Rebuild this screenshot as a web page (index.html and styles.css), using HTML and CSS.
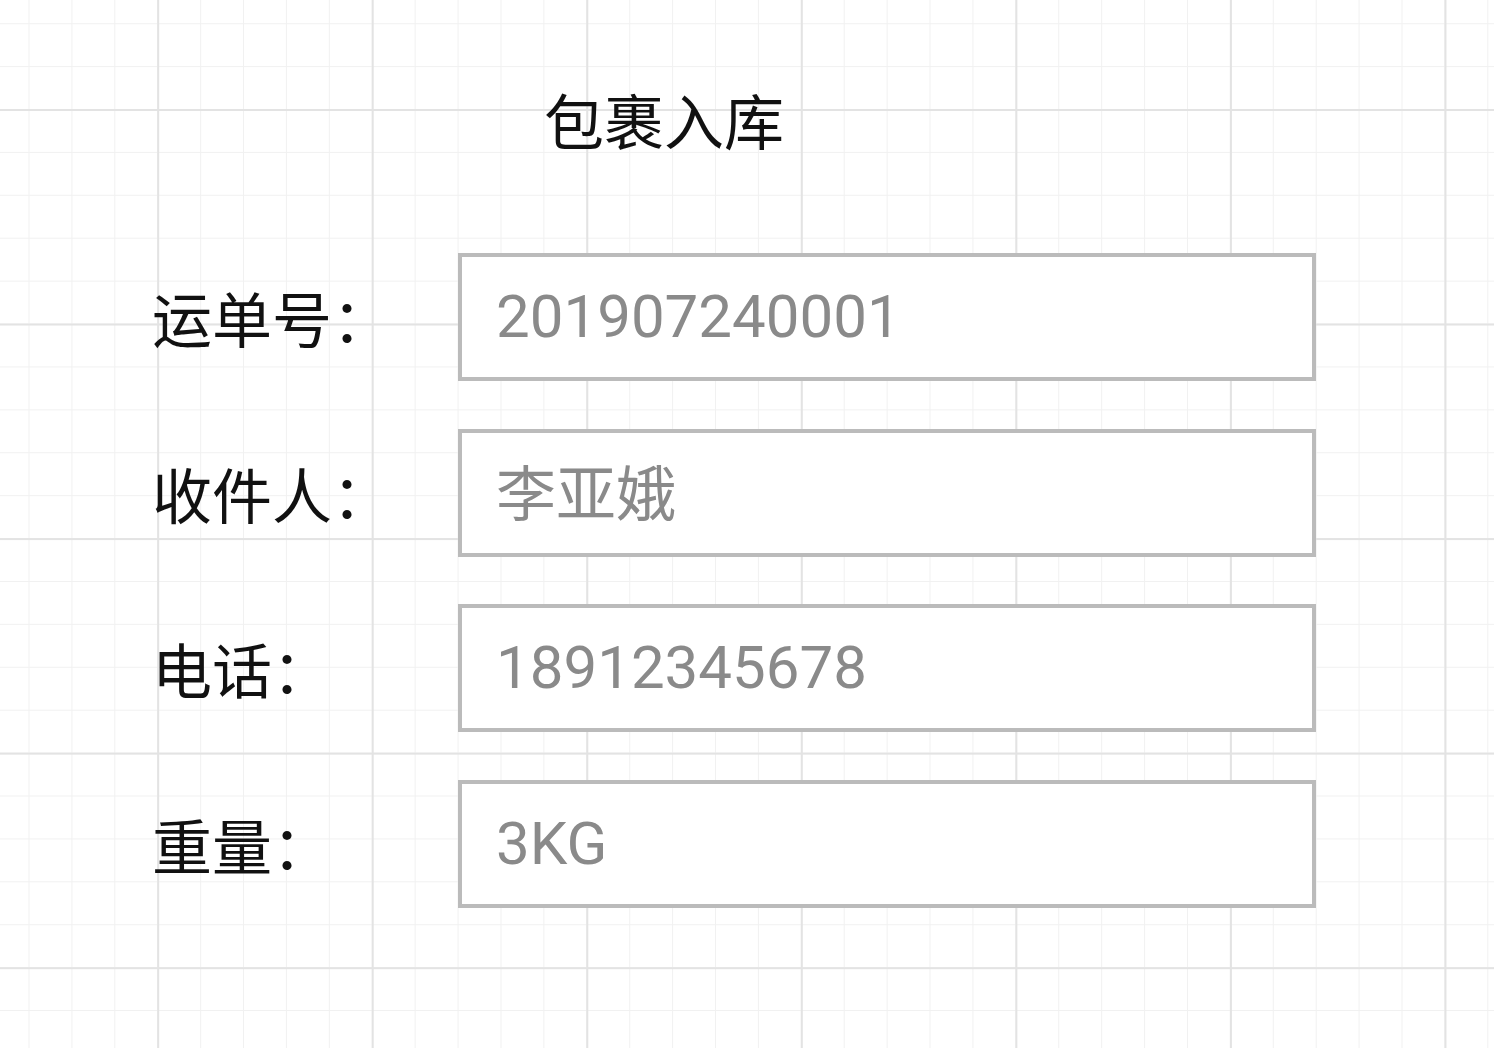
FILE: index.html
```html
<!DOCTYPE html>
<html lang="zh-CN">
<head>
<meta charset="utf-8">
<title>包裹入库</title>
<link rel="stylesheet" href="styles.css">
</head>
<body>
<main class="page">
  <h1 class="title">包裹入库</h1>
  <div class="form">
    <div class="row">
      <span class="label">运单号：</span>
      <div class="field">201907240001</div>
    </div>
    <div class="row">
      <span class="label">收件人：</span>
      <div class="field field--cjk">李亚娥</div>
    </div>
    <div class="row">
      <span class="label">电话：</span>
      <div class="field">18912345678</div>
    </div>
    <div class="row">
      <span class="label">重量：</span>
      <div class="field">3KG</div>
    </div>
  </div>
</main>
</body>
</html>
```

FILE: styles.css
```css
html, body {
  margin: 0;
  padding: 0;
}

body {
  min-height: 100vh;
  background-color: #ffffff;
  background-image:
    linear-gradient(to right, #e3e3e3 0, #e3e3e3 1.6px, transparent 1.6px),
    linear-gradient(to bottom, #e3e3e3 0, #e3e3e3 1.6px, transparent 1.6px),
    linear-gradient(to right, #f1f1f1 0, #f1f1f1 1.2px, transparent 1.2px),
    linear-gradient(to bottom, #f1f1f1 0, #f1f1f1 1.2px, transparent 1.2px);
  background-size: 214.55px 214.55px, 214.55px 214.55px, 42.91px 42.91px, 42.91px 42.91px;
  background-position: 157.2px 0, 0 109px, 28.5px 0, 0 23.2px;
  font-family: "Noto Sans CJK SC", sans-serif;
  color: #111111;
}

.page {
  padding-top: 89px;
}

.title {
  margin: 0 0 104px 544px;
  font-size: 60px;
  line-height: 60px;
  font-weight: 400;
  color: #111111;
}

.form {
  display: flex;
  flex-direction: column;
  gap: 47.7px;
  padding-left: 152px;
}

.row {
  display: flex;
  align-items: center;
}

.label {
  width: 306px;
  font-size: 60px;
  line-height: 60px;
  white-space: nowrap;
}

.field {
  box-sizing: border-box;
  width: 858px;
  height: 128px;
  border: 4px solid #bbbbbb;
  background: #ffffff;
  padding-left: 34px;
  display: flex;
  align-items: center;
  font-family: Roboto, "Noto Sans CJK SC", sans-serif;
  font-size: 60px;
  line-height: 60px;
  color: #8a8a8a;
}

.field--cjk {
  padding-top: 6px;
}
```
